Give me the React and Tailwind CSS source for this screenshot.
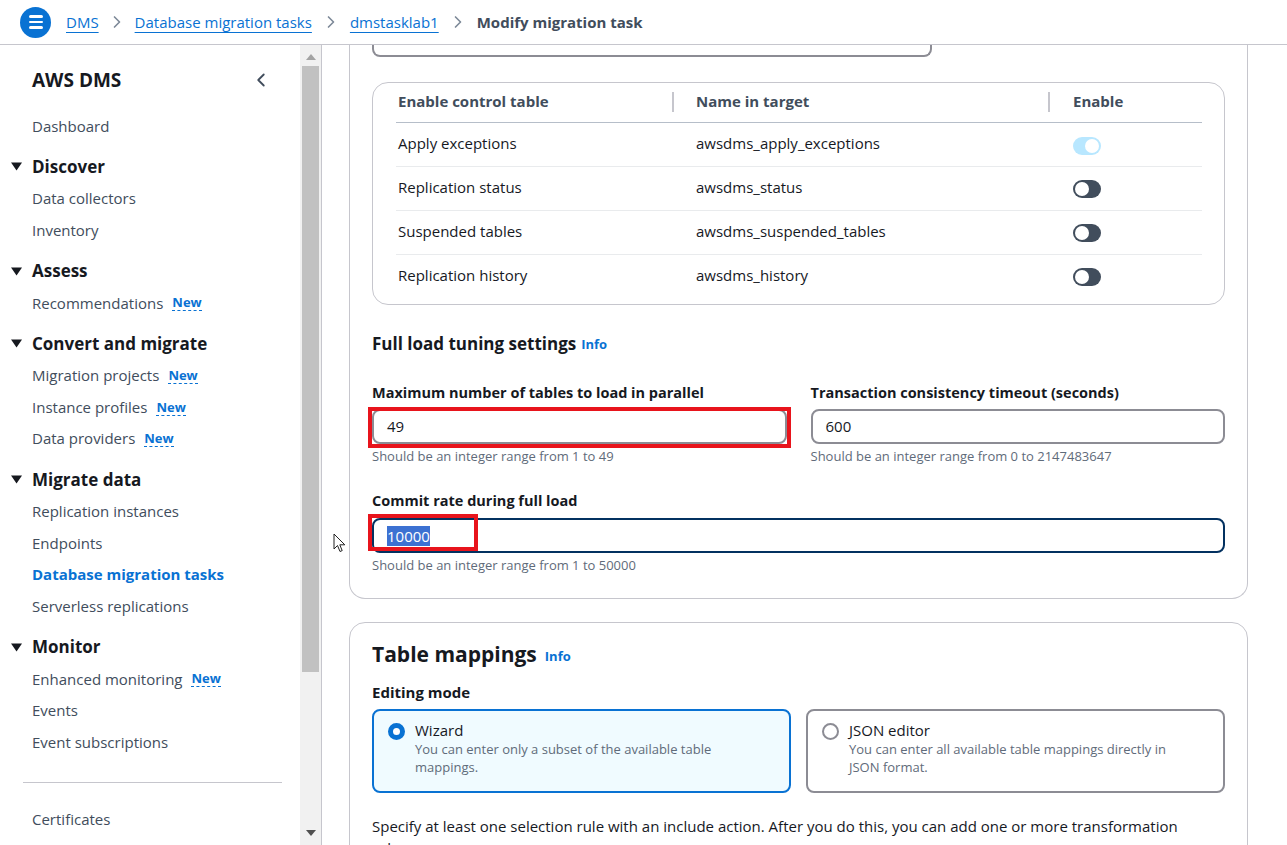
import { ChevronLeft, ChevronRight } from 'lucide-react';

const nav = [
  { label: 'Dashboard' },
  { section: 'Discover', items: [{ label: 'Data collectors' }, { label: 'Inventory' }] },
  { section: 'Assess', items: [{ label: 'Recommendations', isNew: true }] },
  {
    section: 'Convert and migrate',
    items: [
      { label: 'Migration projects', isNew: true },
      { label: 'Instance profiles', isNew: true },
      { label: 'Data providers', isNew: true },
    ],
  },
  {
    section: 'Migrate data',
    items: [
      { label: 'Replication instances' },
      { label: 'Endpoints' },
      { label: 'Database migration tasks', active: true },
      { label: 'Serverless replications' },
    ],
  },
  {
    section: 'Monitor',
    items: [
      { label: 'Enhanced monitoring', isNew: true },
      { label: 'Events' },
      { label: 'Event subscriptions' },
    ],
  },
];

const controlTables = [
  { name: 'Apply exceptions', target: 'awsdms_apply_exceptions', on: true },
  { name: 'Replication status', target: 'awsdms_status' },
  { name: 'Suspended tables', target: 'awsdms_suspended_tables' },
  { name: 'Replication history', target: 'awsdms_history' },
];

function NavItem({ label, isNew, active }) {
  return (
    <div className="h-[31.6px] flex items-center pl-[32px]">
      <span className={active ? 'text-[15px] font-bold text-[#0972d3]' : 'text-[15px] text-[#414d5c]'}>{label}</span>
      {isNew && (
        <span className="ml-[9px] text-[13px] font-bold leading-[16px] text-[#0972d3] border-b border-dashed border-[#0972d3]">
          New
        </span>
      )}
    </div>
  );
}

function Toggle({ on }) {
  return (
    <div
      className={
        on
          ? 'w-[28px] h-[18px] rounded-full bg-[#b8e7ff] flex items-center justify-end px-[2px] mt-[5px]'
          : 'w-[28px] h-[18px] rounded-full bg-[#414d5c] flex items-center px-[2px] mt-[3px]'
      }
    >
      <div className="w-[14px] h-[14px] rounded-full bg-white" />
    </div>
  );
}

function Field({ label, value, help, children }) {
  return (
    <div className="flex flex-col">
      <div className="h-[22px] flex items-center text-[14.5px] font-bold text-[#16191f]">{label}</div>
      {children || (
        <div className="mt-[5px] h-[35px] border-2 border-[#8c8c94] rounded-[8px] flex items-center pl-[13px] text-[15px] text-[#16191f]">
          {value}
        </div>
      )}
      <div className="mt-[4px] h-[18px] flex items-center text-[13px] text-[#5f6b7a]">{help}</div>
    </div>
  );
}

function Tile({ selected, title, desc }) {
  return (
    <div
      className={
        selected
          ? 'h-[84px] border-2 border-[#0972d3] bg-[#f0fbff] rounded-[8px] flex pl-[14px] pr-[30px] pt-[9px]'
          : 'h-[84px] border-2 border-[#8c8c94] bg-white rounded-[8px] flex pl-[14px] pr-[30px] pt-[9px]'
      }
    >
      <div
        className={
          selected
            ? 'mt-[3px] w-[17px] h-[17px] shrink-0 rounded-full border-[5px] border-[#0972d3] bg-white'
            : 'mt-[3px] w-[17px] h-[17px] shrink-0 rounded-full border-2 border-[#8c8c94] bg-white'
        }
      />
      <div className="ml-[10px] flex flex-col">
        <div className="text-[15px] leading-[20px] text-[#16191f]">{title}</div>
        <div className="text-[13px] leading-[18px] text-[#5f6b7a]">{desc}</div>
      </div>
    </div>
  );
}

export default function App() {
  return (
    <div className="h-[845px] w-full overflow-hidden flex flex-col bg-white font-['Open_Sans','Noto_Sans',sans-serif]">
      <header className="h-[45px] shrink-0 flex items-center border-b border-[#c6c6cd] pl-[20px]">
        <div className="w-[31px] h-[31px] rounded-full bg-[#0972d3] flex flex-col items-center justify-center gap-[3px]">
          <div className="w-[14px] h-[2.5px] bg-white rounded" />
          <div className="w-[14px] h-[2.5px] bg-white rounded" />
          <div className="w-[14px] h-[2.5px] bg-white rounded" />
        </div>
        <nav className="ml-[15px] flex items-center text-[15px]">
          <span className="text-[#0972d3] underline underline-offset-[4px]">DMS</span>
          <ChevronRight size={20} strokeWidth={2} className="mx-[8px] text-[#7d8998]" />
          <span className="text-[#0972d3] underline underline-offset-[4px]">Database migration tasks</span>
          <ChevronRight size={20} strokeWidth={2} className="mx-[9px] text-[#7d8998]" />
          <span className="text-[#0972d3] underline underline-offset-[4px]">dmstasklab1</span>
          <ChevronRight size={20} strokeWidth={2} className="mx-[9px] text-[#7d8998]" />
          <span className="font-bold text-[#414d5c]">Modify migration task</span>
        </nav>
      </header>

      <div className="flex flex-1 min-h-0">
        <aside className="w-[300px] shrink-0 pt-[15px]">
          <div className="h-[40px] flex items-center justify-between pl-[32px] pr-[28px]">
            <span className="text-[19px] font-bold text-[#16191f]">AWS DMS</span>
            <ChevronLeft size={22} strokeWidth={2} className="text-[#414d5c]" />
          </div>
          <div className="mt-[10px]">
            {nav.map((n) =>
              n.section ? (
                <div key={n.section} className="mt-[9.5px]">
                  <div className="h-[31.6px] flex items-center">
                    <svg width="11" height="9" viewBox="0 0 11 9" className="ml-[11px]">
                      <path d="M0 0.5 H11 L5.5 8.5 Z" fill="#16191f" />
                    </svg>
                    <span className="ml-[10px] text-[17px] font-bold text-[#16191f]">{n.section}</span>
                  </div>
                  {n.items.map((it) => (
                    <NavItem key={it.label} {...it} />
                  ))}
                </div>
              ) : (
                <NavItem key={n.label} {...n} />
              )
            )}
          </div>
          <div className="mt-[24px] ml-[23px] w-[259px] border-t border-[#c6c6cd]" />
          <div className="mt-[21px]">
            <NavItem label="Certificates" />
          </div>
        </aside>

        <div className="w-[22px] shrink-0 bg-[#f1f1f1] border-r border-[#c6c6cd] flex flex-col items-center">
          <svg width="10" height="6" viewBox="0 0 10 6" className="mt-[9px]">
            <path d="M0 6 L5 0 L10 6 Z" fill="#a3a3a3" />
          </svg>
          <div className="mt-[6px] w-[17px] h-[606px] bg-[#c1c1c1]" />
          <div className="flex-1" />
          <svg width="10" height="6" viewBox="0 0 10 6" className="mb-[9px]">
            <path d="M0 0 L10 0 L5 6 Z" fill="#505050" />
          </svg>
        </div>

        <main className="relative flex-1 overflow-hidden pl-[27px] pr-[39px]">
          <section className="border border-t-0 border-[#c6c6cd] rounded-b-[16px] px-[22px] pb-[23px]">
            <div className="w-[560px] h-[12px] border-2 border-t-0 border-[#8c8c94] rounded-b-[8px]" />

            <div className="mt-[25px] border border-[#c6c6cd] rounded-[16px] pl-[23px] pr-[22px] pb-[5px]">
              <div className="h-[40px] pb-[2px] flex items-center border-b border-[#b6bec9] text-[15px] font-bold text-[#414d5c]">
                <div className="w-[276px] pl-[2px]">Enable control table</div>
                <div className="w-[2px] h-[20px] bg-[#c6c6cd]" />
                <div className="ml-[22px] w-[352px]">Name in target</div>
                <div className="w-[2px] h-[20px] bg-[#c6c6cd]" />
                <div className="ml-[23px]">Enable</div>
              </div>
              {controlTables.map((r, i) => (
                <div
                  key={r.name}
                  className={
                    i < controlTables.length - 1
                      ? 'h-[44px] pb-[2px] flex items-center border-b border-[#e9ebed] text-[15px] text-[#16191f]'
                      : 'h-[44px] pb-[4px] flex items-center text-[15px] text-[#16191f]'
                  }
                >
                  <div className="w-[300px] pl-[2px]">{r.name}</div>
                  <div className="w-[377px]">{r.target}</div>
                  <Toggle on={r.on} />
                </div>
              ))}
            </div>

            <div className="mt-[24px] h-[30px] flex items-center">
              <span className="text-[17px] font-bold text-[#16191f]">Full load tuning settings</span>
              <span className="ml-[5px] mt-[2px] text-[13px] font-bold text-[#0972d3]">Info</span>
            </div>

            <div className="mt-[23px] grid grid-cols-2 gap-x-[24px]">
              <div className="relative">
                <Field label="Maximum number of tables to load in parallel" value="49" help="Should be an integer range from 1 to 49" />
                <div className="absolute left-[-4px] right-[-4px] top-[25px] h-[41px] border-[4px] border-[#e8141c]" />
              </div>
              <Field label="Transaction consistency timeout (seconds)" value="600" help="Should be an integer range from 0 to 2147483647" />
            </div>

            <div className="mt-[24px] relative">
              <Field label="Commit rate during full load" help="Should be an integer range from 1 to 50000">
                <div className="mt-[6px] h-[35px] border-2 border-[#033160] rounded-[8px] flex items-center pl-[13px] text-[15px]">
                  <span className="bg-[#3c71d2] text-white leading-[20px]">10000</span>
                </div>
              </Field>
              <div className="absolute left-[-4px] top-[24px] w-[110px] h-[37px] border-[4px] border-[#e8141c]" />
            </div>
          </section>

          <section className="mt-[23px] border border-[#c6c6cd] rounded-[16px] px-[22px] pt-[16px]">
            <div className="h-[32px] flex items-center">
              <span className="text-[21px] font-bold text-[#16191f]">Table mappings</span>
              <span className="ml-[8px] mt-[4px] text-[13px] font-bold text-[#0972d3]">Info</span>
            </div>
            <div className="mt-[10px] h-[22px] flex items-center text-[15px] font-bold text-[#16191f]">Editing mode</div>
            <div className="mt-[6px] grid grid-cols-2 gap-x-[15px]">
              <Tile selected title="Wizard" desc="You can enter only a subset of the available table mappings." />
              <Tile title="JSON editor" desc="You can enter all available table mappings directly in JSON format." />
            </div>
            <p className="mt-[22px] text-[15px] leading-[22px] text-[#16191f] pr-[20px]">
              Specify at least one selection rule with an include action. After you do this, you can add one or more transformation rules.
            </p>
            <div className="h-[60px]" />
          </section>

          <svg width="14" height="21" viewBox="0 0 14 21" className="absolute left-[11px] top-[488px]">
            <path d="M1 1 L1 16 L4.5 12.5 L7 18.5 L9.2 17.6 L6.8 11.8 L11.8 11.8 Z" fill="white" stroke="#222" strokeWidth="1" strokeLinejoin="round" />
          </svg>
        </main>
      </div>
    </div>
  );
}
